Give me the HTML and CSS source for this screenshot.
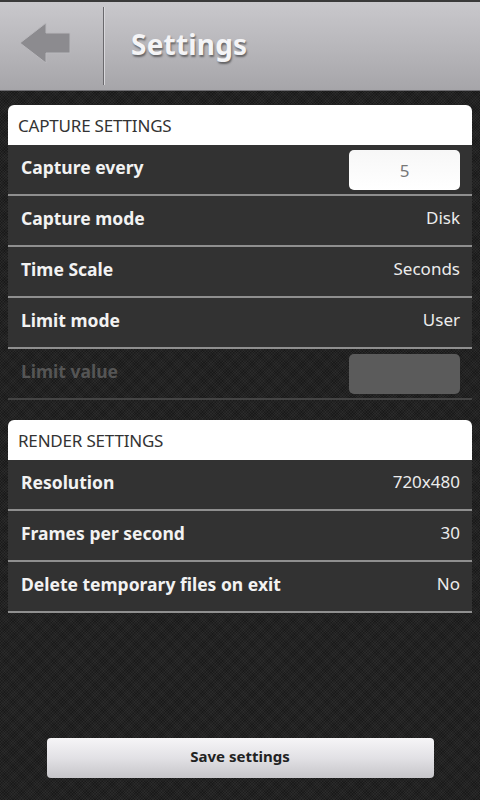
FILE: index.html
```html
<!DOCTYPE html>
<html>
<head>
<meta charset="utf-8">
<link rel="stylesheet" href="styles.css">
</head>
<body>
<div class="screen">
  <header class="topbar">
    <div class="back">
      <svg width="80" height="60" viewBox="0 0 80 60">
        <polygon points="20,21 46,1 46,11 70,11 70,31 46,31 46,41" transform="translate(0,4)" fill="#8c8b8f" stroke="#b9b8bc" stroke-width="1"/>
      </svg>
    </div>
    <div class="divider"></div>
    <h1 class="title">Settings</h1>
  </header>

  <main class="content">
    <section class="group">
      <div class="group-head">CAPTURE SETTINGS</div>
      <div class="row">
        <span class="label">Capture every</span>
        <span class="field">5</span>
      </div>
      <div class="row">
        <span class="label">Capture mode</span>
        <span class="value">Disk</span>
      </div>
      <div class="row">
        <span class="label">Time Scale</span>
        <span class="value">Seconds</span>
      </div>
      <div class="row">
        <span class="label">Limit mode</span>
        <span class="value">User</span>
      </div>
      <div class="row disabled">
        <span class="label">Limit value</span>
        <span class="field off"></span>
      </div>
    </section>

    <section class="group">
      <div class="group-head">RENDER SETTINGS</div>
      <div class="row">
        <span class="label">Resolution</span>
        <span class="value">720x480</span>
      </div>
      <div class="row">
        <span class="label">Frames per second</span>
        <span class="value">30</span>
      </div>
      <div class="row">
        <span class="label">Delete temporary files on exit</span>
        <span class="value">No</span>
      </div>
    </section>
  </main>

  <footer class="footer">
    <button class="save">Save settings</button>
  </footer>
</div>
</body>
</html>
```

FILE: styles.css
```css
* { box-sizing: border-box; }
html, body {
  margin: 0;
  padding: 0;
}
body {
  width: 480px;
  height: 800px;
  overflow: hidden;
  font-family: "Noto Sans", "Open Sans", sans-serif;
  background-color: #222;
  background-image:
    repeating-linear-gradient(45deg, rgba(255,255,255,0.035) 0 1px, transparent 1px 2px),
    repeating-linear-gradient(-45deg, rgba(0,0,0,0.25) 0 1px, transparent 1px 2px);
}
.screen {
  height: 800px;
  display: flex;
  flex-direction: column;
}
.topbar {
  height: 91px;
  display: flex;
  align-items: stretch;
  background: linear-gradient(#c9c8cc, #b8b7bb 50%, #a6a5a9);
  border-top: 2px solid #3a3a3a;
  border-bottom: 1px solid #6e6d71;
}
.back {
  width: 103px;
  display: flex;
  align-items: center;
  justify-content: flex-start;
  padding-top: 3px;
}
.divider {
  width: 1px;
  margin: 5px 0 5px;
  background: #6a696d;
  box-shadow: 1px 0 0 #d8d7db;
}
.title {
  margin: 0;
  padding-left: 27px;
  padding-bottom: 4px;
  display: flex;
  align-items: center;
  font-size: 28px;
  font-weight: 700;
  color: #f4f4f6;
  text-shadow: 1px 2px 2px rgba(0,0,0,0.45);
  letter-spacing: 0.2px;
}
.content {
  flex: 1;
  padding: 14px 8px 0;
  display: flex;
  flex-direction: column;
  gap: 20px;
}
.group-head {
  height: 40px;
  background: #fff;
  border-radius: 6px 6px 0 0;
  color: #333;
  font-size: 17px;
  padding: 9px 0 0 10px;
  letter-spacing: -0.2px;
}
.row {
  height: 51px;
  display: flex;
  align-items: center;
  justify-content: space-between;
  padding: 0 12px 0 13px;
  background: #323232;
  border-bottom: 2px solid #8f8f8f;
}
.label {
  font-size: 17.5px;
  font-weight: 700;
  color: #f2f2f2;
  margin-bottom: 6px;
}
.value {
  font-size: 17px;
  color: #ececec;
  margin-bottom: 6px;
}
.field {
  width: 111px;
  height: 40px;
  border-radius: 5px;
  background: linear-gradient(#f7f7f7, #ffffff);
  display: flex;
  align-items: center;
  justify-content: center;
  font-size: 17px;
  color: #777;
  margin-top: 1px;
}
.row.disabled {
  background: transparent;
  border-bottom-color: #444;
}
.row.disabled .label {
  color: #555;
}
.field.off {
  background: #5b5b5b;
}
.footer {
  display: flex;
  justify-content: center;
  padding: 0 0 22px;
}
.save {
  width: 387px;
  height: 40px;
  padding: 0 0 4px;
  border: none;
  border-radius: 4px;
  background: linear-gradient(#f6f5f7, #e2e1e5 50%, #c6c5c9);
  font-family: "Noto Sans", "Open Sans", sans-serif;
  font-size: 15px;
  font-weight: 700;
  color: #222;
}
```
